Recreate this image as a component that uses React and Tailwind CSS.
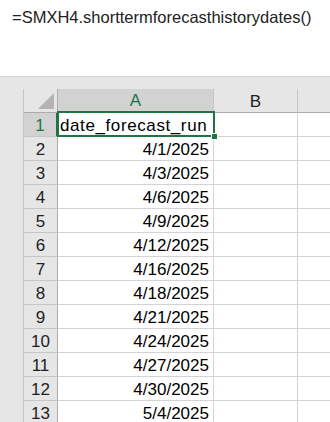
import React from "react";

const dates = [
  "4/1/2025",
  "4/3/2025",
  "4/6/2025",
  "4/9/2025",
  "4/12/2025",
  "4/16/2025",
  "4/18/2025",
  "4/21/2025",
  "4/24/2025",
  "4/27/2025",
  "4/30/2025",
  "5/4/2025",
];

const font = { fontFamily: '"Liberation Sans", Arial, sans-serif' };

export default function App() {
  return (
    <div
      className="w-[330px] h-[422px] overflow-hidden bg-white text-black flex flex-col"
      style={font}
    >
      <div className="h-[76px] shrink-0 pl-[12px] pt-[7px] text-[16.5px] leading-[20px] text-[#222]">
        =SMXH4.shorttermforecasthistorydates()
      </div>
      <div className="h-px shrink-0 bg-[#d4d4d4]" />
      <div className="flex-1 bg-[#e6e6e6] flex flex-col">
        <div className="h-[12px] shrink-0" />
        <div className="flex flex-1">
          <div className="w-[24px] shrink-0 border-r border-[#c6c6c6]" />
          <div className="flex-1 flex flex-col relative">
            {/* header row */}
            <div className="flex h-[24px] shrink-0">
              <div className="w-[34px] shrink-0 border-r border-b border-[#ababab] relative">
                <svg
                  className="absolute left-[14px] top-[4px]"
                  width="16"
                  height="16"
                  viewBox="0 0 16 16"
                >
                  <polygon points="16,0 16,16 0,16" fill="#b4b4b4" />
                </svg>
              </div>
              <div className="w-[156px] shrink-0 bg-[#d2d2d2] border-r border-[#c6c6c6] border-b-2 border-b-[#217346] flex items-center justify-center pt-[2px] text-[17px] text-[#217346]">
                A
              </div>
              <div className="w-[84px] shrink-0 border-r border-[#c6c6c6] border-b border-b-[#ababab] flex items-center justify-center pt-[2px] text-[17px] text-[#222]">
                B
              </div>
              <div className="flex-1 border-b border-[#ababab]" />
            </div>
            {/* row 1 */}
            <div className="flex h-[24px] shrink-0">
              <div className="w-[34px] shrink-0 bg-[#d2d2d2] border-r-2 border-[#217346] border-b border-b-[#c6c6c6] flex items-center justify-center pt-[2px] text-[17px] text-[#217346]">
                1
              </div>
              <div className="w-[156px] shrink-0 bg-white border-r border-b border-[#d4d4d4] flex items-center pl-[2px] pt-[2px] text-[17px] tracking-[0.6px]">
                date_forecast_run
              </div>
              <div className="w-[84px] shrink-0 bg-white border-r border-b border-[#d4d4d4]" />
              <div className="flex-1 bg-white border-b border-[#d4d4d4]" />
            </div>
            {dates.map((d, i) => (
              <div key={d} className="flex h-[24px] shrink-0">
                <div className="w-[34px] shrink-0 border-r border-[#ababab] border-b border-b-[#c6c6c6] flex items-center justify-center pt-[2px] text-[17px] text-[#222]">
                  {i + 2}
                </div>
                <div className="w-[156px] shrink-0 bg-white border-r border-b border-[#d4d4d4] flex items-center justify-end pr-[4px] pt-[2px] text-[17px]">
                  {d}
                </div>
                <div className="w-[84px] shrink-0 bg-white border-r border-b border-[#d4d4d4]" />
                <div className="flex-1 bg-white border-b border-[#d4d4d4]" />
              </div>
            ))}
            {/* selection box */}
            <div className="absolute left-[33px] top-[22px] w-[158px] h-[26px] border-2 border-[#217346] pointer-events-none">
              <div className="absolute right-[-5px] bottom-[-5px] w-[7px] h-[7px] bg-[#217346] border border-white" />
            </div>
          </div>
        </div>
      </div>
    </div>
  );
}
